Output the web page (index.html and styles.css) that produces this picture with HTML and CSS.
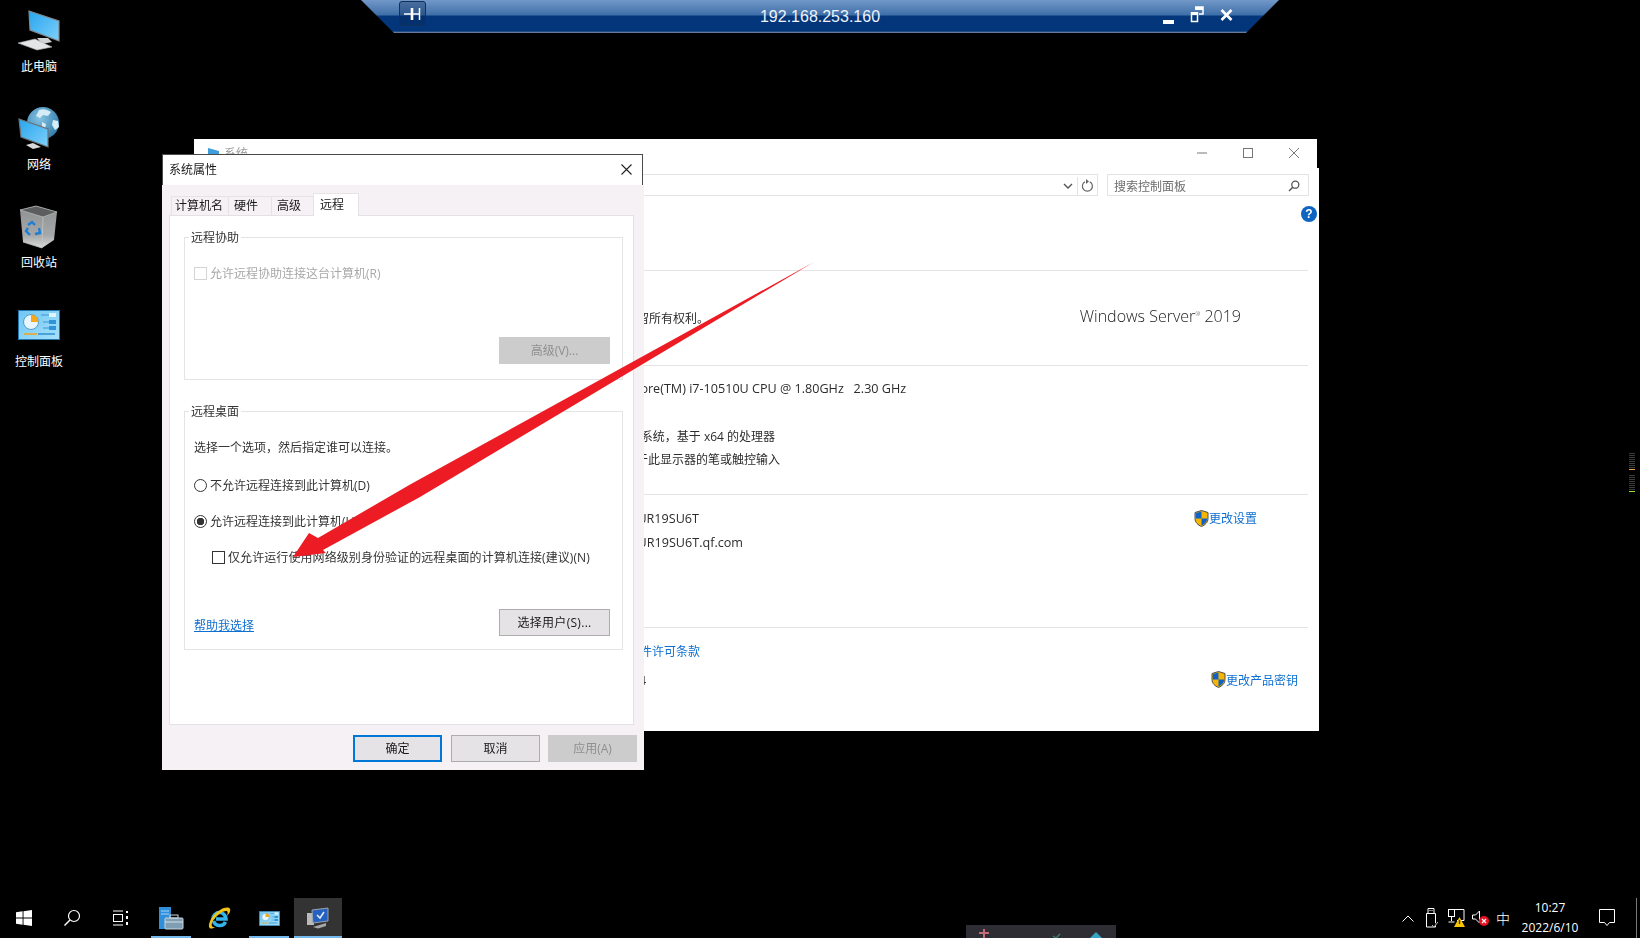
FILE: index.html
```html
<!DOCTYPE html>
<html lang="zh-CN">
<head>
    <meta charset="UTF-8">
    <title>系统属性</title>
    <link rel="stylesheet" href="styles.css">
</head>
<body>
    <svg class="defs" width="0" height="0">
        <defs>
            <linearGradient id="screenBlue" x1="0" y1="0" x2="1" y2="1">
                <stop offset="0" stop-color="#27a5ee"/>
                <stop offset="1" stop-color="#7fd0fa"/>
            </linearGradient>
            <linearGradient id="panelBlue" x1="0" y1="0" x2="1" y2="1">
                <stop offset="0" stop-color="#6fc7f3"/>
                <stop offset="1" stop-color="#a6e0fb"/>
            </linearGradient>
            <linearGradient id="binGrey" x1="0" y1="0" x2="0" y2="1">
                <stop offset="0" stop-color="#8d9091"/>
                <stop offset=".7" stop-color="#a6a8a9"/>
                <stop offset="1" stop-color="#dcdcdc"/>
            </linearGradient>
            <radialGradient id="globeBlue" cx=".4" cy=".35" r=".75">
                <stop offset="0" stop-color="#86c3e3"/>
                <stop offset="1" stop-color="#2a76a6"/>
            </radialGradient>
            <symbol id="controlPanel" viewBox="0 0 42 30">
                <rect x=".5" y=".5" width="41" height="29" fill="url(#panelBlue)" stroke="#2478ad"/>
                <circle cx="13" cy="12" r="7.5" fill="#e8f6fd" stroke="#4d9fd0"/>
                <path d="M13 12V4.500A7.500 7.500 0 0 1 20.500 12Z" fill="#f5a81c"/>
                <path d="M23 5h9M25 12h6M25 18h6" stroke="#3c97d3" stroke-width="1.200"/>
                <rect x="31" y="3" width="7" height="4" fill="#dff3fd"/>
                <rect x="31" y="10" width="7" height="4" fill="#2f95d8"/>
                <rect x="31" y="16" width="7" height="4" fill="#2f95d8"/>
                <path d="M6 24h13" stroke="#f0a31a" stroke-width="1.500"/>
                <path d="M20 24h17" stroke="#2f8fd3" stroke-width="1.500"/>
            </symbol>
            <symbol id="shield" viewBox="0 0 15 17">
                <path d="M7.500 .5 14 2.500V8.500C14 12.500 11 15 7.500 16.500 4 15 1 12.500 1 8.500V2.500Z" fill="#f7b500" stroke="#4a4f57"/>
                <path d="M7.500 1.500V8.500H1.800V3ZM7.500 8.500V15.500C10.500 14 13.200 12 13.200 8.500Z" fill="#0f62c4"/>
            </symbol>
        </defs>
    </svg>

    <div class="desktop">
        <div class="connection-bar">
            <div class="conn-left">
                <span class="pin-btn">
                    <svg width="17" height="12" viewBox="0 0 17 12"><path d="M0 6h16" stroke="#fff" stroke-width="1.500"/><path d="M8 0v12" stroke="#fff" stroke-width="2.600"/><path d="M15.500 0v12" stroke="#fff" stroke-width="1.500"/></svg>
                </span>
            </div>
            <div class="conn-title">192.168.253.160</div>
            <div class="conn-controls">
                <svg width="11" height="6" viewBox="0 0 11 6"><rect y="1" width="11" height="4" fill="#fff"/></svg>
                <svg width="14" height="17" viewBox="0 0 14 17"><path d="M5 1h8v7H9" fill="none" stroke="#fff" stroke-width="1.500"/><rect x="5" y="1" width="8" height="3" fill="#fff"/><rect x="1.500" y="7" width="6" height="8.500" fill="none" stroke="#fff" stroke-width="1.500"/><rect x="1" y="6" width="7" height="3" fill="#fff"/></svg>
                <svg width="13" height="12" viewBox="0 0 13 12"><path d="M1.500 1l10 10M11.500 1l-10 10" stroke="#fff" stroke-width="2.600"/></svg>
            </div>
        </div>

        <div class="desktop-icons">
            <div class="desk-item">
                <svg width="48" height="48" viewBox="0 0 48 48">
                    <path d="M22 30h11l4 4-10 2Z" fill="#d0d2d3"/>
                    <path d="M14 3 44 13V33L15 22Z" fill="url(#screenBlue)" stroke="#83888c" stroke-width="1.200"/>
                    <path d="M3 35 20 31 37 39 22 42Z" fill="#e3e5e6" stroke="#aeb1b3" stroke-width=".6"/>
                </svg>
                <span>此电脑</span>
            </div>
            <div class="desk-item">
                <svg width="48" height="48" viewBox="0 0 48 48">
                    <circle cx="28" cy="17" r="16" fill="url(#globeBlue)"/>
                    <path d="M24 4c5-2 9 0 12 2l-3 4-5-1-3 3-4-2ZM38 14l5 1 1 6-4 3-3-5ZM27 16l4 2-1 5-3-2Z" fill="#d5ecf7"/>
                    <path d="M4 13 33 23V41L6 31Z" fill="url(#screenBlue)" stroke="#6d7276" stroke-width="1.200"/>
                    <path d="M11 39 18 37 26 41 18 43Z" fill="#d6d8d9"/>
                </svg>
                <span>网络</span>
            </div>
            <div class="desk-item">
                <svg width="48" height="48" viewBox="0 0 48 48">
                    <path d="M5 6 21 2 42 8 39 36 27 44 8 38Z" fill="url(#binGrey)"/>
                    <path d="M5 6 21 2 42 8 28 13Z" fill="#5b5d5e" stroke="#b5b7b8" stroke-width=".8"/>
                    <path d="M8 38 27 44 28 13" fill="none" stroke="#c2c4c5" stroke-width=".8"/>
                    <path d="M13 21l4-3 3 3M24 24l1 5-5 1M15 31l-4-4 2-3" fill="none" stroke="#1b7fd4" stroke-width="2.400"/>
                </svg>
                <span>回收站</span>
            </div>
            <div class="desk-item">
                <svg width="42" height="30" class="cp-desk"><use href="#controlPanel"/></svg>
                <span>控制面板</span>
            </div>
        </div>

        <div class="window-back">
            <div class="back-title">
                <svg class="back-icon" width="11" height="11" viewBox="0 0 11 11"><path d="M0 0 11 3V11H0Z" fill="#3f9ddb"/></svg>
                <span class="back-name">系统</span>
                <span class="back-buttons">
                    <svg width="46" height="12" viewBox="0 0 12 12" preserveAspectRatio="xMidYMid"><path d="M1 6h10" stroke="#777" stroke-width="1"/></svg>
                    <svg width="46" height="12" viewBox="0 0 12 12"><rect x="1.500" y="1.500" width="9" height="9" fill="none" stroke="#777"/></svg>
                    <svg width="46" height="12" viewBox="0 0 12 12"><path d="M1 1l10 10M11 1 1 11" stroke="#777"/></svg>
                </span>
            </div>
            <div class="back-body">
                <div class="toolbar">
                    <div class="address-box">
                        <svg class="chevron" width="10" height="6" viewBox="0 0 10 6"><path d="M1 1l4 4 4-4" fill="none" stroke="#555" stroke-width="1.400"/></svg>
                        <span class="refresh">
                            <svg width="13" height="14" viewBox="0 0 13 14"><path d="M4 2.800A5 5 0 1 0 8.800 2.800" fill="none" stroke="#666" stroke-width="1.200"/><path d="M8 0v5l-3-2.500Z" fill="#666" transform="rotate(180 6.500 2.500)"/></svg>
                        </span>
                    </div>
                    <div class="search-box">
                        <span>搜索控制面板</span>
                        <svg width="12" height="12" viewBox="0 0 12 12"><circle cx="7.300" cy="4.700" r="3.500" fill="none" stroke="#555" stroke-width="1.300"/><path d="M4.800 7.300 1 11" stroke="#555" stroke-width="1.500"/></svg>
                    </div>
                </div>
                <div class="help-row"><span class="help-btn">?</span></div>

                <div class="section section-edition">
                    <span class="cut cut-copyright">© 2018 Microsoft Corporation。保留所有权利。</span>
                    <span class="brand">Windows Server<sup>®</sup> 2019</span>
                </div>
                <div class="section section-system">
                    <div class="row row-cjk"><span class="value latin">Intel(R) Core(TM) i7-10510U CPU @ 1.80GHz&nbsp;&nbsp; 2.30 GHz</span></div>
                    <div class="row"><span class="value latin">4.00 GB</span></div>
                    <div class="row"><span class="value">64 位操作系统，基于 x64 的处理器</span></div>
                    <div class="row"><span class="value">没有可用于此显示器的笔或触控输入</span></div>
                </div>
                <div class="section section-computer">
                    <div class="row row-cjk">
                        <span class="cut latin cut-host">WIN-UR19SU6T</span>
                        <a class="link admin-link link-settings"><svg width="15" height="17"><use href="#shield"/></svg>更改设置</a>
                    </div>
                    <div class="row row-cjk"><span class="cut latin cut-fqdn">WIN-UR19SU6T.qf.com</span></div>
                </div>
                <div class="section section-license">
                    <div class="row"><a class="link cut cut-license">阅读 Microsoft 软件许可条款</a></div>
                    <div class="row row-pid">
                        <span class="cut cut-pid">00431-10000-00000-AA114</span>
                        <a class="link admin-link link-key"><svg width="15" height="17"><use href="#shield"/></svg>更改产品密钥</a>
                    </div>
                </div>
            </div>
        </div>

        <div class="dialog">
            <div class="dialog-title">
                <span>系统属性</span>
                <svg width="11" height="11" viewBox="0 0 11 11"><path d="M.5.5l10 10M10.500.5l-10 10" stroke="#222" stroke-width="1.100"/></svg>
            </div>
            <div class="dialog-body">
                <div class="tabs">
                    <span class="tab tab-name">计算机名</span>
                    <span class="tab tab-hw">硬件</span>
                    <span class="tab tab-adv">高级</span>
                    <span class="tab tab-active">远程</span>
                </div>
                <div class="panel">
                    <fieldset class="group group-assist">
                        <legend>远程协助</legend>
                        <label class="option option-first is-disabled"><input type="checkbox" disabled>允许远程协助连接这台计算机(R)</label>
                        <div class="group-foot foot-assist"><button class="btn btn-wide" disabled>高级(V)...</button></div>
                    </fieldset>
                    <fieldset class="group group-desktop">
                        <legend>远程桌面</legend>
                        <p class="hint">选择一个选项，然后指定谁可以连接。</p>
                        <label class="option option-none"><input type="radio" name="rd">不允许远程连接到此计算机(D)</label>
                        <label class="option option-allow"><input type="radio" name="rd" checked>允许远程连接到此计算机(L)</label>
                        <label class="option option-nla"><input type="checkbox">仅允许运行使用网络级别身份验证的远程桌面的计算机连接(建议)(N)</label>
                        <div class="group-foot foot-desktop">
                            <a class="help-link">帮助我选择</a>
                            <button class="btn btn-wide btn-users">选择用户(S)...</button>
                        </div>
                    </fieldset>
                </div>
                <div class="dialog-buttons">
                    <button class="btn btn-default">确定</button>
                    <button class="btn btn-cancel">取消</button>
                    <button class="btn" disabled>应用(A)</button>
                </div>
            </div>
        </div>

        <svg class="arrow" width="1640" height="938" viewBox="0 0 1640 938">
            <path d="M814 262 411 484 318 538 309 533 293 557 326 553 323 550 420 497Z" fill="#ed1c24"/>
        </svg>

        <div class="level-meter">
            <div class="meter-group"><i></i><i></i><i></i><i></i><i></i><i></i><i></i><i></i><i class="tick-orange"></i></div>
            <div class="meter-group"><i></i><i></i><i></i><i></i><i></i><i></i><i></i><i></i><i class="tick-green"></i></div>
        </div>

        <div class="peek">
            <svg width="150" height="13" viewBox="0 0 150 13">
                <path d="M18 4v9M13 8h10" stroke="#c46a78" stroke-width="2"/>
                <path d="M87 11l3 2 4-4" fill="none" stroke="#3e7d66" stroke-width="1.500"/>
                <path d="M124 13l6-6 6 6Z" fill="#35a3c4"/>
            </svg>
        </div>

        <div class="taskbar">
            <span class="task-btn">
                <svg width="16" height="16" viewBox="0 0 16 16"><path d="M0 2.300 6.600 1.300V7.500H0ZM7.500 1.200 16 0V7.500H7.500ZM0 8.400H6.600V14.700L0 13.700ZM7.500 8.400H16V16L7.500 14.800Z" fill="#fff"/></svg>
            </span>
            <span class="task-btn">
                <svg width="18" height="18" viewBox="0 0 18 18"><circle cx="11" cy="7" r="5.500" fill="none" stroke="#fff" stroke-width="1.200"/><path d="M7 11 1.500 16.500" stroke="#fff" stroke-width="1.400"/></svg>
            </span>
            <span class="task-btn">
                <svg width="16" height="16" viewBox="0 0 16 16"><path d="M1 1h10M1 15h10" stroke="#fff"/><rect x="1.500" y="4.500" width="9" height="7" fill="none" stroke="#fff"/><rect x="14" y="1" width="2" height="2" fill="#fff"/><rect x="14" y="6" width="2" height="3" fill="#fff"/><rect x="14" y="12" width="2" height="3" fill="#fff"/></svg>
            </span>
            <span class="task-btn app-first is-open">
                <svg width="26" height="24" viewBox="0 0 26 24"><path d="M1 1h12v22H1Z" fill="#2f8fdb"/><path d="M3 5h8M3 8h8" stroke="#a5d6f7"/><rect x="7" y="12" width="18" height="11" rx="1" fill="#7f9db3" stroke="#c7d6e0"/><rect x="12" y="9" width="8" height="3" fill="none" stroke="#c7d6e0"/><path d="M7 16h18" stroke="#d6e2ea"/></svg>
            </span>
            <span class="task-btn">
                <svg width="24" height="24" viewBox="0 0 24 24"><path d="M6 13a6.500 6.500 0 1 1 13 0H9M18.500 16a6.500 6.500 0 0 1-12-1" fill="none" stroke="#33b4ec" stroke-width="3.600"/><path d="M2 21C1 16 7 7 13 4c5-3 9-3 10-1 1 2-1 5-3 7 1-3 1-5-1-5-3 0-7 3-10 6-3 3-5 7-4 9 0 1 2 1 3 1-3 2-5 2-6 0Z" fill="#f0c419"/></svg>
            </span>
            <span class="task-btn app-panel is-open">
                <svg width="23" height="15"><use href="#controlPanel"/></svg>
            </span>
            <span class="task-btn app-active is-open">
                <svg width="24" height="22" viewBox="0 0 24 22"><path d="M1 6h7v12H1Z" fill="#b9b9b9"/><path d="M6 3 22 1V14L7 16Z" fill="#2561c0" stroke="#9aa3ad"/><path d="M11 8l3 3 4-6" fill="none" stroke="#e8f0fa" stroke-width="1.500"/><path d="M7 20 20 16v3l-8 2.500Z" fill="#a8a8a8"/></svg>
            </span>

            <div class="tray">
                <span class="tray-item"><svg width="12" height="7" viewBox="0 0 12 7"><path d="M.5 6.500 6 1l5.500 5.500" fill="none" stroke="#fff"/></svg></span>
                <span class="tray-item"><svg width="14" height="20" viewBox="0 0 14 20"><path d="M3 .5h6v5H3ZM1.500 5.500h9V19h-9Z" fill="none" stroke="#fff"/><path d="M4.500 2.500h1M6.500 2.500h1" stroke="#fff"/><path d="M7 17l2 2 4-5" fill="#000" stroke="#bbb"/></svg></span>
                <span class="tray-item"><svg width="17" height="18" viewBox="0 0 17 18"><path d="M3 .5h13v11H9" fill="none" stroke="#fff"/><rect x=".5" y=".5" width="6" height="7" fill="#000" stroke="#fff"/><path d="M3.500 8v4M.5 13h6" stroke="#fff"/><path d="M11.500 8 17 18H6Z" fill="#f7c600"/><path d="M11.500 11v4" stroke="#333" stroke-width="1.300"/></svg></span>
                <span class="tray-item"><svg width="17" height="16" viewBox="0 0 17 16"><path d="M.5 5h3l4-4v12l-4-4h-3Z" fill="none" stroke="#fff"/><circle cx="12" cy="11" r="5" fill="#e81123"/><path d="M10 9l4 4M14 9l-4 4" stroke="#fff" stroke-width="1.200"/></svg></span>
                <span class="tray-item ime">中</span>
                <div class="clock"><span>10:27</span><span>2022/6/10</span></div>
                <span class="notify"><svg width="16" height="18" viewBox="0 0 16 18"><path d="M.5.5h15v13h-5l-2.500 3-2.500-3h-5Z" fill="none" stroke="#fff"/></svg></span>
                <span class="show-desktop"></span>
            </div>
        </div>
    </div>
</body>
</html>
```

FILE: styles.css
```css
* {
    box-sizing: border-box;
}
body {
    margin: 0;
    background: #000;
    font-family: "Open Sans", "Noto Sans CJK SC", sans-serif;
    font-size: 12px;
    overflow: hidden;
}
.defs {
    position: absolute;
}
.desktop {
    position: relative;
    width: 1640px;
    height: 938px;
    overflow: hidden;
}

/* remote desktop connection bar */
.connection-bar {
    position: absolute;
    left: 361px;
    top: 0;
    width: 918px;
    height: 33px;
    display: grid;
    grid-template-columns: 1fr auto 1fr;
    align-items: center;
    padding: 0 38px;
    background: linear-gradient(#7298c8 0, #3f6fa9 15px, #03367a 16px, #03357a 31px, #8493a8 33px);
    clip-path: polygon(0 0, 100% 0, calc(100% - 33px) 100%, 33px 100%);
}
.conn-left {
    display: flex;
    align-items: flex-start;
    height: 100%;
    padding-top: 1px;
}
.pin-btn {
    display: flex;
    align-items: center;
    justify-content: center;
    width: 27px;
    height: 25px;
    background: rgba(10, 40, 90, .35);
    border: 1px solid #12305a;
    border-radius: 3px;
}
.conn-title {
    color: #eef3fa;
    font-family: "Liberation Sans", sans-serif;
    font-size: 16px;
}
.conn-controls {
    display: flex;
    justify-content: flex-end;
    align-items: center;
    gap: 16px;
    padding: 0 8px 4px 0;
}
.conn-controls svg:first-child {
    margin-top: 14px;
}

/* desktop shortcuts */
.desktop-icons {
    position: absolute;
    left: 0;
    top: 8px;
    width: 78px;
    display: flex;
    flex-direction: column;
}
.desk-item {
    height: 98px;
    display: flex;
    flex-direction: column;
    align-items: center;
    color: #fff;
    text-shadow: 0 1px 2px #000;
}
.desk-item span {
    margin-top: 3px;
    line-height: 16px;
}
.cp-desk {
    margin: 8px 0 11px;
}

/* control panel window behind the dialog */
.window-back {
    position: absolute;
    left: 194px;
    top: 139px;
    width: 1125px;
    height: 592px;
    display: flex;
    flex-direction: column;
    filter: blur(.35px);
}
.back-title {
    height: 29px;
    margin-right: 2px;
    background: #fff;
    display: flex;
    padding: 8px 0 0 14px;
    color: #999;
}
.back-icon {
    margin-top: 1px;
}
.back-name {
    margin-left: 5px;
    line-height: 14px;
}
.back-buttons {
    margin-left: auto;
    display: flex;
}
.back-body {
    flex: 1;
    background: #fff;
}
.toolbar {
    display: flex;
    gap: 9px;
    padding: 6px 10px 0 0;
}
.address-box {
    flex: 1;
    height: 22px;
    border: 1px solid #e3e3e3;
    border-left: 0;
    display: flex;
    justify-content: flex-end;
    align-items: center;
    padding-top: 2px;
}
.chevron {
    margin-right: 4px;
}
.refresh {
    width: 20px;
    height: 100%;
    border-left: 1px solid #e3e3e3;
    display: flex;
    align-items: center;
    justify-content: center;
}
.search-box {
    width: 202px;
    height: 22px;
    border: 1px solid #e3e3e3;
    display: flex;
    justify-content: space-between;
    align-items: center;
    padding: 2px 8px 0 6px;
    color: #6d6d6d;
}
.help-row {
    display: flex;
    justify-content: flex-end;
    padding: 10px 2px 0 0;
    height: 74px;
}
.help-btn {
    width: 16px;
    height: 16px;
    border-radius: 50%;
    background: #0f64c0;
    color: #fff;
    font-family: "Liberation Sans", sans-serif;
    font-size: 12px;
    font-weight: bold;
    line-height: 16px;
    text-align: center;
}
.section {
    margin: 0 11px 0 99px;
    border-top: 1px solid #e4e4e4;
    color: #2c2c2c;
}
.section-edition {
    height: 95px;
    display: flex;
    align-items: center;
    justify-content: space-between;
    padding-right: 67px;
}
.brand {
    font-weight: 300;
    font-size: 16px;
    color: #222;
    margin-bottom: 4px;
}
.brand sup {
    font-size: 6px;
    vertical-align: 6px;
    line-height: 0;
}
.section-system {
    height: 129px;
    padding-top: 12px;
}
.section-computer {
    height: 133px;
    padding-top: 12px;
}
.section-computer .row {
    height: 24px;
}
.section-license {
    padding-top: 11px;
}
.row {
    display: flex;
    align-items: center;
    height: 23px;
    white-space: nowrap;
}
.row-cjk {
    padding-bottom: 2px;
}
.row-pid {
    margin-top: 7px;
}
.value {
    margin-left: 295px;
}
.latin {
    font-size: 12.6px;
}
.cut {
    text-align: right;
    white-space: nowrap;
}
.cut-copyright {
    width: 416px;
}
.cut-license {
    width: 407px;
}
.cut-host {
    width: 406px;
}
.cut-fqdn {
    width: 450px;
}
.cut-pid {
    width: 353px;
}
.link {
    color: #0f6fd0;
}
.admin-link {
    margin-left: auto;
    display: flex;
    align-items: center;
    padding-bottom: 2px;
}
.row-cjk .admin-link {
    padding-bottom: 0;
}
.link-settings {
    margin-right: 51px;
}
.link-key {
    margin-right: 10px;
}

/* system properties dialog */
.dialog {
    position: absolute;
    left: 162px;
    top: 154px;
    width: 482px;
    height: 616px;
    color: #1a1a1a;
    filter: blur(.35px);
}
.dialog-title {
    width: 481px;
    height: 31px;
    background: #fff;
    border: 1px solid #4a4a4a;
    border-bottom: 0;
    display: flex;
    justify-content: space-between;
    align-items: center;
    padding: 0 10px 2px 6px;
}
.dialog-body {
    height: 585px;
    background: #f5f1f5;
    padding: 8px 7px;
}
.tabs {
    display: flex;
    align-items: flex-end;
    height: 23px;
    padding-left: 2px;
    position: relative;
    z-index: 1;
}
.tab {
    height: 19px;
    margin-bottom: 1px;
    border: 1px solid #e6e3e6;
    border-bottom: 0;
    border-right-width: 0;
    padding-left: 5px;
    line-height: 18px;
}
.tab-name {
    width: 57px;
    padding-left: 3px;
}
.tab-hw {
    width: 43px;
}
.tab-adv {
    width: 42px;
}
.tab-active {
    width: 46px;
    height: 23px;
    margin-bottom: 0;
    background: #fff;
    border-right-width: 1px;
    padding-left: 6px;
    line-height: 21px;
}
.panel {
    height: 510px;
    width: 465px;
    margin-top: -1px;
    background: #fff;
    border: 1px solid #e4e1e4;
    padding: 13px 0 0 14px;
}
.group {
    margin: 0;
    padding: 0 12px 0 9px;
    width: 439px;
    border: 1px solid #e4e4e4;
    display: block;
}
.group legend {
    margin-left: -5px;
    padding: 0 2px;
    line-height: 16px;
    color: #333;
    position: relative;
    top: 1px;
}
.group-assist {
    height: 151px;
}
.group-desktop {
    height: 247px;
    margin-top: 23px;
}
.option {
    display: flex;
    align-items: center;
    gap: 3px;
    height: 16px;
    color: #333;
}
.option input {
    appearance: none;
    width: 13px;
    height: 13px;
    margin: 0;
    background: #fff;
    border: 1px solid #333;
    flex: none;
}
.option input[type="radio"] {
    border-radius: 50%;
}
.option input[type="radio"]:checked {
    background: radial-gradient(circle, #333 0, #333 3.500px, #fff 4px);
}
.option input:disabled {
    border-color: #d4d4d4;
}
.is-disabled {
    color: #a8a8a8;
}
.option-first {
    margin-top: 20px;
}
.hint {
    margin: 21px 0 0;
    line-height: 16px;
    color: #333;
}
.option-none {
    margin-top: 21px;
}
.option-allow {
    margin-top: 20px;
}
.option-nla {
    margin-top: 20px;
    padding-left: 18px;
    letter-spacing: .08px;
}
.group-foot {
    display: flex;
    justify-content: flex-end;
}
.foot-assist {
    margin-top: 56px;
}
.foot-desktop {
    margin-top: 44px;
    justify-content: space-between;
}
.help-link {
    margin-top: 7px;
    color: #0f6fd0;
    text-decoration: underline;
}
.btn {
    width: 89px;
    height: 27px;
    padding: 0 0 2px;
    font: inherit;
    color: #1a1a1a;
    background: #e6e3e6;
    border: 1px solid #adadad;
}
.btn:disabled {
    background: #cccccc;
    border-color: #cccccc;
    color: #8f8f8f;
}
.btn-wide {
    width: 111px;
}
.btn-users {
    letter-spacing: .3px;
}
.btn-default {
    border: 2px solid #0078d7;
}
.dialog-buttons {
    display: flex;
    justify-content: flex-end;
    gap: 8px;
    margin-top: 10px;
}
.btn-cancel {
    margin-left: 1px;
}

/* red annotation arrow */
.arrow {
    position: absolute;
    left: 0;
    top: 0;
    pointer-events: none;
}

.level-meter {
    position: absolute;
    left: 1629px;
    top: 453px;
    display: flex;
    flex-direction: column;
    gap: 5px;
}
.meter-group {
    display: flex;
    flex-direction: column;
    gap: 1px;
}
.meter-group i {
    display: block;
    width: 6px;
    height: 1px;
    background: #3c3c3c;
}
.meter-group .tick-orange {
    background: #f0a23c;
}
.meter-group .tick-green {
    background: #8ce62c;
}

.peek {
    position: absolute;
    left: 966px;
    top: 925px;
    width: 150px;
    height: 13px;
    background: #2d2d33;
}

/* taskbar */
.taskbar {
    position: absolute;
    left: 0;
    bottom: 0;
    width: 100%;
    height: 40px;
    display: flex;
    color: #fff;
}
.task-btn {
    position: relative;
    width: 48px;
    height: 40px;
    display: flex;
    align-items: center;
    justify-content: center;
}
.app-first {
    margin-left: 3px;
}
.app-panel {
    margin-left: 2px;
}
.app-active {
    margin-left: 1px;
    background: #333;
}
.is-open::after {
    content: "";
    position: absolute;
    left: 4px;
    right: 4px;
    bottom: 0;
    height: 2px;
    background: #76b9ed;
}
.app-active::after {
    left: 0;
    right: 0;
}
.tray {
    margin-left: auto;
    display: flex;
    align-items: center;
    height: 100%;
}
.tray-item {
    width: 24px;
    display: flex;
    justify-content: center;
    align-items: center;
}
.ime {
    font-family: "Noto Sans CJK SC", sans-serif;
    font-size: 14px;
    font-weight: 300;
    padding-right: 2px;
}
.clock {
    width: 64px;
    margin-left: 2px;
    display: flex;
    flex-direction: column;
    align-items: center;
    line-height: 20px;
}
.notify {
    width: 49px;
    display: flex;
    justify-content: center;
}
.show-desktop {
    width: 9px;
    height: 100%;
    position: relative;
}
.show-desktop::before {
    content: "";
    position: absolute;
    left: 5px;
    top: 0;
    bottom: 0;
    border-left: 1px solid #777;
}
```
